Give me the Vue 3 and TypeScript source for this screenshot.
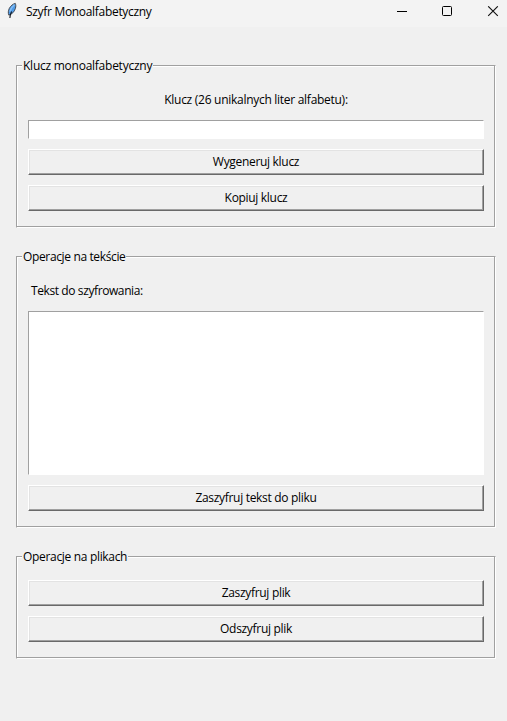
<script setup lang="ts">
import { ref } from 'vue'

const key = ref('')
const plain = ref('')
</script>

<template>
  <div class="window">
    <header class="titlebar">
      <svg class="feather" width="12" height="18" viewBox="0 0 12 18">
        <path d="M9.3 1.4C6.9 1.9 4.6 3.9 3.3 6.4C2.2 8.8 2 10.8 2.8 13.1C5.8 12.4 8.4 9.8 9.4 6.4C10 4.3 9.9 2.8 9.3 1.4Z" fill="#4f9be8" stroke="#3a3d44" stroke-width="0.9" />
        <path d="M8.4 2.8C6.4 4.6 4.6 7 3.8 9.6" fill="none" stroke="#86bff5" stroke-width="1.3" />
        <path d="M5.6 9.4C4.6 11.4 4 13.4 3.9 16" fill="none" stroke="#10151d" stroke-width="1.1" />
      </svg>
      <span class="title">Szyfr Monoalfabetyczny</span>
      <svg class="controls" width="103" height="12" viewBox="0 0 103 12">
        <path d="M1 5.5H11" stroke="#000" />
        <rect x="46.5" y="0.5" width="9" height="9" rx="1" fill="none" stroke="#000" />
        <path d="M92.2 0.3L101.8 9.9M101.8 0.3L92.2 9.9" stroke="#111" stroke-width="1.1" />
      </svg>
    </header>

    <main class="content">
      <section class="group key-group">
        <div class="legend">Klucz monoalfabetyczny</div>
        <label class="label centered" for="key">Klucz (26 unikalnych liter alfabetu):</label>
        <input id="key" v-model="key" class="field entry" />
        <button class="btn">Wygeneruj klucz</button>
        <button class="btn">Kopiuj klucz</button>
      </section>

      <section class="group text-group">
        <div class="legend">Operacje na tekście</div>
        <label class="label" for="plain">Tekst do szyfrowania:</label>
        <textarea id="plain" v-model="plain" class="field area"></textarea>
        <button class="btn">Zaszyfruj tekst do pliku</button>
      </section>

      <section class="group file-group">
        <div class="legend">Operacje na plikach</div>
        <button class="btn">Zaszyfruj plik</button>
        <button class="btn">Odszyfruj plik</button>
      </section>
    </main>
  </div>
</template>

<style>
body {
  background: #f0f0f0;
}
</style>

<style scoped>
.window {
  box-sizing: border-box;
  width: 507px;
  height: 721px;
  overflow: hidden;
  background: #f0f0f0;
  color: #000;
  font-family: "Open Sans", "Noto Sans", sans-serif;
  font-size: 12px;
  line-height: 16px;
  letter-spacing: -0.28px;
}
.titlebar {
  display: flex;
  height: 27px;
  background: #f3f3f3;
}
.feather {
  flex: none;
  margin: 2px 0 0 6px;
}
.title {
  flex: 1;
  margin: 4px 0 0 8px;
  white-space: nowrap;
  letter-spacing: -0.31px;
}
.controls {
  flex: none;
  margin: 6px 8px 0 0;
}
.content {
  display: flex;
  flex-direction: column;
  gap: 28px;
  padding: 38px 11px 0 16px;
}
.group {
  box-sizing: border-box;
  display: flex;
  flex-direction: column;
  gap: 10px;
  padding: 0 11px;
  border: 1px solid;
  border-color: #a0a0a0 #fff #fff #a0a0a0;
  box-shadow: inset -1px -1px #a0a0a0, inset 1px 1px #fff;
}
.key-group {
  height: 163px;
}
.text-group {
  height: 272px;
}
.file-group {
  height: 103px;
}
.legend {
  align-self: flex-start;
  height: 16px;
  margin: -8px 0 7px -6px;
  padding: 0 1px;
  background: #f0f0f0;
  white-space: nowrap;
}
.key-group .legend {
  letter-spacing: -0.25px;
}
.text-group .legend {
  letter-spacing: -0.36px;
}
.file-group .legend {
  margin-bottom: 5px;
  letter-spacing: -0.32px;
}
.label {
  height: 18px;
  margin-bottom: 1px;
  padding-left: 3px;
  line-height: 18px;
  white-space: nowrap;
}
.text-group .label {
  letter-spacing: -0.4px;
}
.key-group .centered {
  padding-left: 0;
  text-align: center;
}
.field {
  box-sizing: border-box;
  display: block;
  width: 456px;
  margin: 0;
  padding: 1px;
  border: 1px solid;
  border-color: #a0a0a0 #fff #fff #a0a0a0;
  border-radius: 0;
  outline: none;
  background: #fff;
  font: inherit;
  resize: none;
}
.entry {
  height: 19px;
}
.area {
  height: 164px;
}
.btn {
  box-sizing: border-box;
  width: 456px;
  height: 26px;
  padding: 0;
  border: 1px solid;
  border-color: #fff #696969 #696969 #fff;
  border-radius: 0;
  background: #f0f0f0;
  box-shadow: inset -1px -1px #a0a0a0, inset 1px 1px #e3e3e3;
  color: #000;
  font: inherit;
  letter-spacing: -0.31px;
  text-align: center;
}
</style>
